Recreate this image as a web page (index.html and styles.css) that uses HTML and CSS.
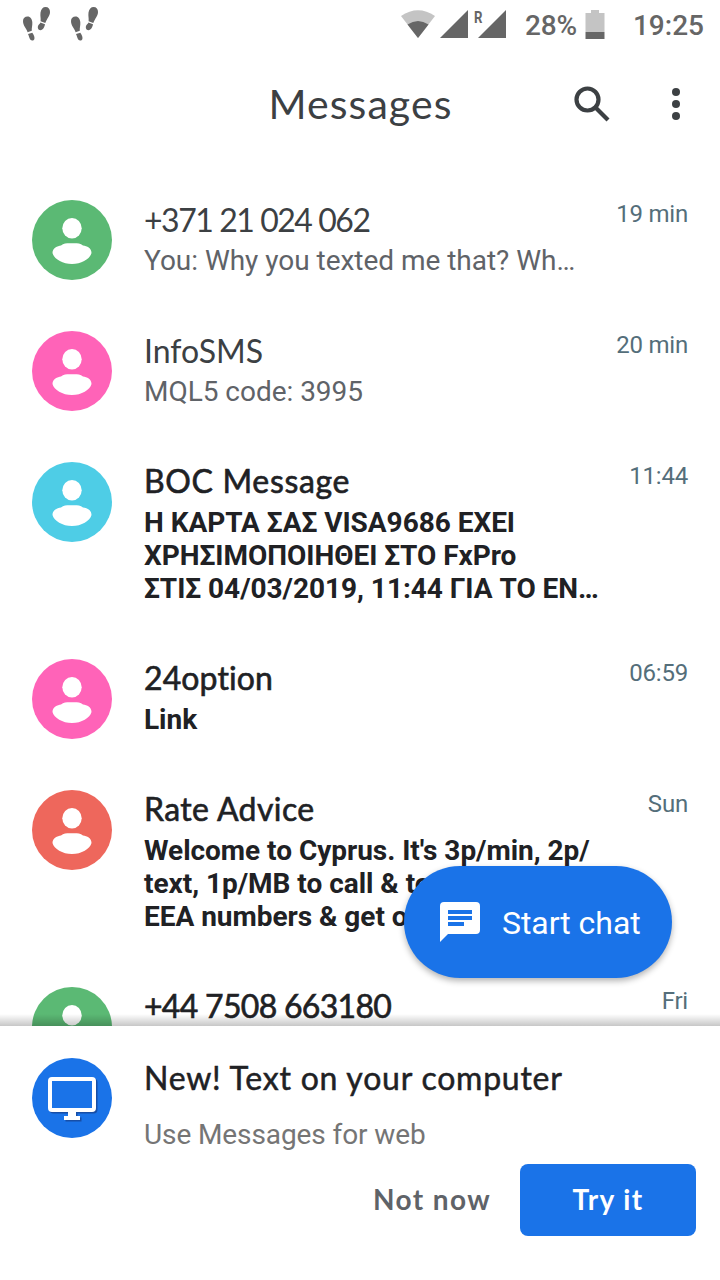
FILE: index.html
```
<!DOCTYPE html>
<html lang="en">
<head>
  <meta charset="UTF-8" />
  <meta name="viewport" content="width=device-width, initial-scale=1.0"/>
  <title>Messages</title>
  <link rel="stylesheet" href="styles.css">
</head>
<body>
<svg class="defs" width="0" height="0">
  <symbol id="steps" viewBox="0 0 28 36">
    <path d="M1 14C1 11 3 9.500 5.500 9.500C8.500 9.500 10 12 10.300 15C10.600 18.500 9.500 21 9.800 23.800L5.600 25.200C4.500 21.500 1 19 1 14Z"/>
    <path d="M6 27L10.300 25.700C12 28 13 30.500 12.300 32.300C11.700 34 9.300 34 8.200 32.500C7.300 31 7 29 6 27Z"/>
    <path d="M18.500 5.500C19 2 21 0 23.500 0C26.500 0 28 2 28 5C28 9 25 11.500 23.300 16L18.600 14.300C19 11 18 9 18.500 5.500Z"/>
    <path d="M18.400 15.500L23 17.300C22.600 20 21 23 18.500 23.200C16 23.200 15.300 20.500 16.200 18.500C16.800 17.300 18 17 18.400 15.500Z"/>
  </symbol>
  <symbol id="person" viewBox="0 0 80 80">
    <ellipse cx="40" cy="28.300" rx="9.700" ry="10.300"/>
    <path d="M20.500 53C20.500 48 25.500 46 29 45.500C32 43 36 43.300 40 43.300C44 43.300 48 43 51 45.500C55 46 59.500 48 59.500 53C58 59 49.500 64 40 64C30.500 64 22 59 20.500 53Z"/>
  </symbol>
</svg>

<div class="phone">
  <div class="status">
    <div class="status-left">
      <svg class="steps" viewBox="0 0 28 36"><use href="#steps"/></svg>
      <svg class="steps" viewBox="0 0 28 36"><use href="#steps"/></svg>
    </div>
    <svg class="signals" viewBox="0 0 108 30">
      <path class="dim" d="M1 6Q18 -5.500 35 6L18 28Z"/>
      <path d="M7.500 14.500Q18 7.500 28.500 14.500L18 28Z"/>
      <path d="M68 0V28H40Z"/>
      <path d="M106 0V28H78Z"/>
      <text transform="translate(74 12.500) scale(0.800 1)">R</text>
    </svg>
    <span class="percent">28%</span>
    <svg class="battery" viewBox="0 0 20 30">
      <path class="dim" d="M6 0H14V3H19.500V22H0.500V3H6Z"/>
      <path d="M0.500 22H19.500V29H0.500Z"/>
    </svg>
    <span class="clock">19:25</span>
  </div>

  <header class="header">
    <h1>Messages</h1>
    <svg class="search" viewBox="0 0 36 36">
      <circle cx="13.500" cy="13.500" r="11"/>
      <path d="M22 22L34 34"/>
    </svg>
    <svg class="more" viewBox="0 0 8 32">
      <circle cx="4" cy="4" r="4"/>
      <circle cx="4" cy="16" r="4"/>
      <circle cx="4" cy="28" r="4"/>
    </svg>
  </header>

  <main class="list">
    <div class="row">
      <div class="avatar green"><svg viewBox="0 0 80 80"><use href="#person"/></svg></div>
      <div class="text">
        <h2 class="name n1">+371 21 024 062</h2>
        <p class="preview">You: Why you texted me that? Wh…</p>
      </div>
      <span class="time">19 min</span>
    </div>
    <div class="row">
      <div class="avatar pink"><svg viewBox="0 0 80 80"><use href="#person"/></svg></div>
      <div class="text">
        <h2 class="name">InfoSMS</h2>
        <p class="preview">MQL5 code: 3995</p>
      </div>
      <span class="time">20 min</span>
    </div>
    <div class="row unread">
      <div class="avatar cyan"><svg viewBox="0 0 80 80"><use href="#person"/></svg></div>
      <div class="text">
        <h2 class="name n3">BOC Message</h2>
        <p class="preview">Η ΚΑΡΤΑ ΣΑΣ VISA9686 ΕΧΕΙ<br>ΧΡΗΣΙΜΟΠΟΙΗΘΕΙ ΣΤΟ FxPro<br>ΣΤΙΣ 04/03/2019, 11:44 ΓΙΑ ΤΟ ΕΝ…</p>
      </div>
      <span class="time">11:44</span>
    </div>
    <div class="row unread">
      <div class="avatar pink"><svg viewBox="0 0 80 80"><use href="#person"/></svg></div>
      <div class="text">
        <h2 class="name n4">24option</h2>
        <p class="preview">Link</p>
      </div>
      <span class="time">06:59</span>
    </div>
    <div class="row unread">
      <div class="avatar red"><svg viewBox="0 0 80 80"><use href="#person"/></svg></div>
      <div class="text">
        <h2 class="name n5">Rate Advice</h2>
        <p class="preview">Welcome to Cyprus. It's 3p/min, 2p/<br>text, 1p/MB to call &amp; to<br>EEA numbers &amp; get o</p>
      </div>
      <span class="time">Sun</span>
    </div>
    <div class="row unread">
      <div class="avatar green"><svg viewBox="0 0 80 80"><use href="#person"/></svg></div>
      <div class="text">
        <h2 class="name n6">+44 7508 663180</h2>
      </div>
      <span class="time">Fri</span>
    </div>
    <button class="fab">
      <svg viewBox="0 0 40 40">
        <path d="M4 0H36Q40 0 40 4V28Q40 32 36 32H8L0 40V4Q0 0 4 0Z"/>
        <path class="lines" d="M8 8H32V12H8ZM8 14H32V18H8ZM8 20H24V24H8Z"/>
      </svg>
      <span>Start chat</span>
    </button>
  </main>

  <section class="promo">
    <div class="promo-top">
      <div class="avatar blue">
        <svg viewBox="0 0 80 80">
          <g class="monitor-shadow" transform="translate(1.500 1.500)">
            <rect x="18" y="21" width="44" height="31" rx="2"/>
            <path d="M36 53H44V58H48V62H32V58H36Z"/>
          </g>
          <rect class="screen" x="18" y="21" width="44" height="31"/>
          <g class="monitor">
            <rect x="18" y="21" width="44" height="31" rx="2"/>
            <path d="M36 53H44V58H48V62H32V58H36Z"/>
          </g>
        </svg>
      </div>
      <div class="promo-text">
        <h2 class="promo-title">New! Text on your computer</h2>
        <p>Use Messages for web</p>
      </div>
    </div>
    <div class="actions">
      <button class="later">Not now</button>
      <button class="try">Try it</button>
    </div>
  </section>
</div>
</body>
</html>
```

FILE: styles.css
```
* {
  box-sizing: border-box;
}
body {
  margin: 0;
  background-color: #fff;
  font-family: Roboto, sans-serif;
}
h1, h2, p {
  margin: 0;
}
button {
  border: none;
  padding: 0;
  cursor: pointer;
}
.defs {
  display: block;
}
.phone {
  width: 720px;
  height: 1280px;
  display: flex;
  flex-direction: column;
  overflow: hidden;
}

/* status bar */
.status {
  height: 48px;
  padding: 2px 16px 0 22px;
  display: flex;
  align-items: center;
  color: #666;
  fill: #666;
  font-size: 28px;
  font-weight: 500;
}
.status-left {
  display: flex;
  gap: 20px;
  margin-right: auto;
}
.steps {
  width: 28px;
  height: 36px;
}
.signals {
  width: 108px;
  height: 30px;
  margin-right: 17px;
  overflow: visible;
}
.signals text {
  font-size: 16.500px;
  font-weight: 700;
}
.dim {
  fill: #c4c4c4;
}
.percent {
  letter-spacing: -0.2px;
}
.battery {
  width: 20px;
  height: 30px;
  margin: 0 28px 0 8px;
}

/* header */
.header {
  height: 112px;
  padding: 0 40px;
  display: grid;
  grid-template-columns: 1fr auto 1fr;
  align-items: center;
  color: #3c4043;
  fill: #3c4043;
}
.header h1 {
  grid-column: 2;
  padding: 0 0 2px 1px;
  font-family: Lato, sans-serif;
  font-size: 41px;
  font-weight: 400;
  letter-spacing: 1.100px;
}
.search {
  grid-column: 3;
  grid-row: 1;
  justify-self: end;
  width: 36px;
  height: 36px;
  margin-right: 70px;
  fill: none;
  stroke: #3c4043;
  stroke-width: 4.200;
}
.more {
  grid-column: 3;
  grid-row: 1;
  justify-self: end;
  width: 8px;
  height: 32px;
}

/* conversations */
.list {
  position: relative;
  height: 866px;
  padding-top: 16px;
  overflow: hidden;
}
.list::after {
  content: "";
  position: absolute;
  left: 0;
  right: 0;
  bottom: 0;
  height: 12px;
  background: linear-gradient(rgba(0,0,0,0), rgba(0,0,0,0.22));
}
.row {
  display: flex;
  padding: 24px 32px 30px;
}
.avatar {
  width: 80px;
  height: 80px;
  flex-shrink: 0;
  margin-right: 32px;
  border-radius: 50%;
  fill: #fff;
}
.avatar svg {
  display: block;
}
.green { background-color: #5bb974; }
.pink { background-color: #ff63b8; }
.cyan { background-color: #4ecde6; }
.red { background-color: #ee675c; }
.blue { background-color: #1a73e8; }
.text {
  flex: 1;
  min-width: 0;
  white-space: nowrap;
}
.name {
  height: 44px;
  line-height: 40px;
  font-family: Lato, sans-serif;
  font-size: 32px;
  font-weight: 400;
  font-variant-ligatures: none;
  color: #3c4043;
}
.n1 { letter-spacing: -1.450px; }
.n3 { letter-spacing: 0.650px; }
.n4 { letter-spacing: 0.100px; }
.n5 { letter-spacing: 0.400px; }
.n6 { letter-spacing: -0.700px; }
.preview {
  font-size: 28px;
  line-height: 33px;
  letter-spacing: -0.030px;
  color: #5f6368;
}
.unread .name {
  line-height: 38px;
  color: #202124;
  -webkit-text-stroke: 0.600px #202124;
}
.unread .preview {
  font-weight: 700;
  color: #202124;
}
.time {
  font-size: 24px;
  line-height: 28px;
  letter-spacing: -0.200px;
  color: #546e7a;
}
.row .avatar {
  margin-bottom: -3px;
}

.fab {
  position: absolute;
  right: 48px;
  bottom: 48px;
  width: 268px;
  height: 112px;
  padding-left: 36px;
  display: flex;
  align-items: center;
  gap: 22px;
  border-radius: 56px;
  background-color: #1a73e8;
  box-shadow: 0 3px 6px rgba(0,0,0,0.3);
  color: #fff;
  font-family: Roboto, sans-serif;
  font-size: 32px;
  letter-spacing: -0.050px;
}
.fab span {
  padding-top: 2px;
}
.fab svg {
  width: 40px;
  height: 40px;
  fill: #fff;
}
.fab .lines {
  fill: #1a73e8;
}

/* web promo */
.promo {
  flex: 1;
  padding: 32px 24px 0 32px;
}
.promo-top {
  display: flex;
}
.promo-title {
  line-height: 40px;
  font-family: Lato, sans-serif;
  font-size: 32px;
  font-weight: 400;
  letter-spacing: 0.770px;
  color: #202124;
  -webkit-text-stroke: 0.500px #202124;
}
.promo-text p {
  margin-top: 20px;
  font-size: 28px;
  line-height: 33px;
  letter-spacing: -0.100px;
  color: #757575;
}
.monitor rect {
  fill: none;
  stroke: #fff;
  stroke-width: 4;
}
.monitor-shadow {
  fill: #174ea6;
}
.monitor-shadow rect {
  fill: none;
  stroke: #174ea6;
  stroke-width: 4;
}
.screen {
  fill: #1a73e8;
}
.actions {
  display: flex;
  justify-content: flex-end;
  margin-top: 13px;
}
.actions button {
  height: 72px;
  padding-bottom: 2px;
  font-family: Lato, sans-serif;
  font-size: 28px;
  font-weight: 700;
  letter-spacing: 1.400px;
  border-radius: 8px;
}
.actions .later {
  margin-right: 29px;
  background: none;
  color: #5f6368;
}
.actions .try {
  width: 176px;
  background-color: #1a73e8;
  color: #fff;
}
```
